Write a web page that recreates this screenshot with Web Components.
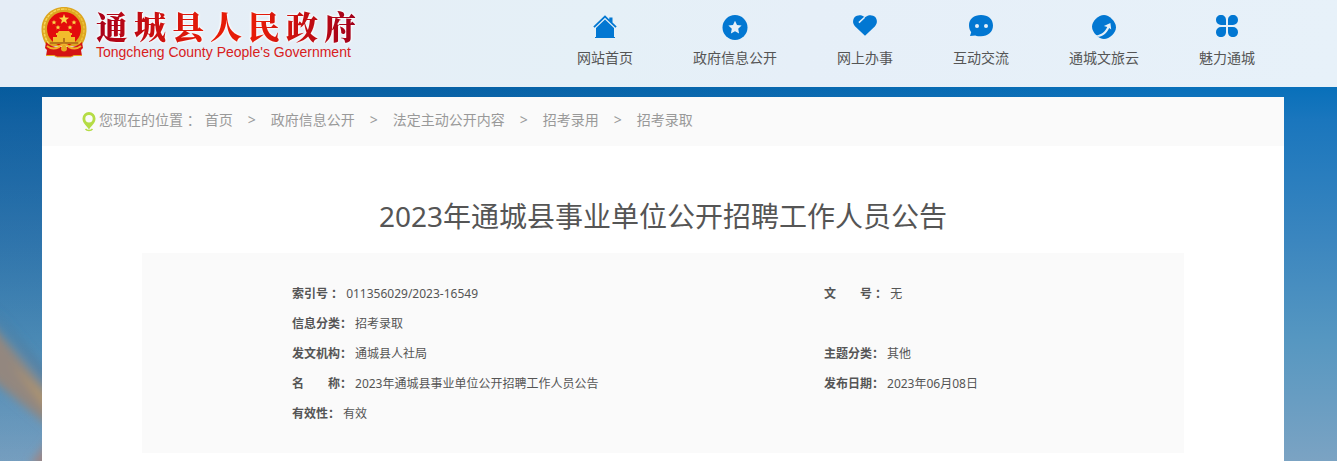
<!DOCTYPE html>
<html lang="zh-CN">
<head>
<meta charset="utf-8">
<title>2023年通城县事业单位公开招聘工作人员公告</title>
<style>
  body {
    margin: 0;
    font-family: "Noto Sans", "Noto Sans CJK SC", sans-serif;
    font-size: 14px;
    color: #555;
  }
</style>
</head>
<body>
<page-shell>
  <site-header slot="header">
    <site-logo slot="logo" sub="Tongcheng County People's Government">通城县人民政府</site-logo>
    <nav-item icon="home">网站首页</nav-item>
    <nav-item icon="star">政府信息公开</nav-item>
    <nav-item icon="heart">网上办事</nav-item>
    <nav-item icon="chat">互动交流</nav-item>
    <nav-item icon="travel">通城文旅云</nav-item>
    <nav-item icon="clover">魅力通城</nav-item>
  </site-header>
  <bread-crumb label="您现在的位置 ："></bread-crumb>
  <article-head>
    <span slot="title">2023年通城县事业单位公开招聘工作人员公告</span>
    <info-panel></info-panel>
  </article-head>
</page-shell>

<script>
const icons = {
  home: '<path d="M1.3 12.6 13 1.2l4.300 4.200V3.400h3.200v5.200l4.200 4-1.300 1.200L13 3.800 2.600 13.800z"/><path d="M13 5.600 22 14v9h1v1H3v-1h1v-9z"/>',
  star: '<circle cx="13" cy="13.500" r="12.500"/><path fill="#e6f0f8" d="m13 6.800 2 4.200 4.600.6-3.400 3.200.9 4.700-4.100-2.300-4.100 2.300.9-4.700-3.400-3.200 4.600-.6z"/>',
  heart: '<path d="M13 21.700 3.200 12.500C.4 9.700.5 5.700 2.800 3.100 5.200.7 9.500.3 13 3.300c3.500-3 7.800-2.600 10.200-.2 2.300 2.600 2.400 6.600-.4 9.400z"/><path d="M12.700 3.200 6.900 8.600" fill="none" stroke="#e6f0f8" stroke-width="1.500"/>',
  chat: '<path d="M13 1C6 1 1 5 1 11.300c0 3 .9 5.200 2.200 7L2 22l5.300-.6C9 22.200 11 22.300 13 22.300c7 0 12-4.300 12-10.800C25 5 20 1 13 1z"/><circle cx="9" cy="12" r="2" fill="#e6f0f8"/><circle cx="18" cy="12" r="2" fill="#e6f0f8"/>',
  travel: '<path d="M13 1C18 1 25 7.500 25 13.300S18.500 25 13 25C8 25 1 18.500 1 12.700 1 7 7.500 1 13 1z"/><path d="M4 21.300c6 .3 10.500-4 12.200-8.300l-3.300-1 6.500-3 .8 6.500-2-1.500C15.500 19.500 11.500 22.800 6.500 22.800z" fill="#e6f0f8"/>',
  clover: '<path d="M12 11H7A5 5 0 0 1 2 6C2 3 4 1 7 1s5 2 5 5zM14 11h5a5 5 0 0 0 5-5C24 3 22 1 19 1s-5 2-5 5zM12 13H7A5 5 0 0 0 2 18C2 21 4 23 7 23s5-2 5-5zM14 13h5a5 5 0 0 1 5 5c0 3-2 5-5 5s-5-2-5-5z"/>'
};

const caminho = ['首页', '政府信息公开', '法定主动公开内容', '招考录用', '招考录取'];

const dados = [
  ['索引号 ：', '011356029/2023-16549'],
  ['文　　号 ：', '无'],
  ['信息分类：', '招考录取'],
  null,
  ['发文机构：', '通城县人社局'],
  ['主题分类：', '其他'],
  ['名　　称：', '2023年通城县事业单位公开招聘工作人员公告'],
  ['发布日期：', '2023年06月08日'],
  ['有效性：', '有效']
];

// sky background, header on top, white sheet below
class PageShell extends HTMLElement {
  constructor() {
    super();
    this.attachShadow({ mode: 'open' }).innerHTML = `
      <style>
        :host {
          display: flex;
          flex-direction: column;
          min-height: 100vh;
          position: relative;
          background:
            radial-gradient(1200px 520px at 0 0, rgba(0, 50, 100, .4), rgba(0, 50, 100, 0)),
            linear-gradient(#0870ba 87px, #1a76bd 120px, #3b86bf 240px, #5697c1 340px, #7ba3c3 461px);
        }
        .beam { position: absolute; left: 0; top: 300px; }
        main {
          position: relative;
          flex: 1;
          margin: 10px 53px 0 42px;
          background: #fff;
        }
      </style>
      <svg class="beam" width="60" height="161" aria-hidden="true">
        <defs><filter id="soft" x="-50%" y="-50%" width="200%" height="200%"><feGaussianBlur stdDeviation="5"/></filter></defs>
        <g filter="url(#soft)">
          <path d="M-20 10 60 105 60 135 -20 70z" fill="#93877f"/>
          <path d="M10 62 60 110 60 125z" fill="#b89a68"/>
          <path d="M-10 5 60 90 60 100z" fill="#56748f"/>
          <path d="M30 165 60 125 60 175z" fill="#9c8584"/>
        </g>
      </svg>
      <slot name="header"></slot>
      <main><slot></slot></main>
    `;
  }
}
customElements.define('page-shell', PageShell);

class SiteHeader extends HTMLElement {
  constructor() {
    super();
    this.attachShadow({ mode: 'open' }).innerHTML = `
      <style>
        :host { display: block; background: linear-gradient(100deg, #e5edf6, #e5f0f7 45%, #e6eff8 60%, #e7f1f9); }
        header {
          display: flex;
          justify-content: space-between;
          align-items: flex-start;
          height: 87px;
          padding: 0 82px 0 40px;
          box-sizing: border-box;
        }
        nav { display: flex; gap: 60px; padding-top: 14px; }
      </style>
      <header>
        <slot name="logo"></slot>
        <nav><slot></slot></nav>
      </header>
    `;
  }
}
customElements.define('site-header', SiteHeader);

class SiteLogo extends HTMLElement {
  constructor() {
    super();
    this.attachShadow({ mode: 'open' }).innerHTML = `
      <style>
        :host { display: block; padding-top: 6px; }
        a { display: flex; gap: 8px; color: #d8201c; text-decoration: none; }
        .nome {
          display: block;
          width: 260px;
          font-family: "Noto Serif CJK SC", "Noto Sans CJK SC", serif;
          font-size: 32px;
          line-height: 38px;
          font-weight: 900;
          text-align: justify;
          text-align-last: justify;
          color: transparent;
          background: linear-gradient(90deg, #a8001a, #e61c08 42%, #e61c08 62%, #a0001c);
          -webkit-background-clip: text;
          background-clip: text;
          filter: drop-shadow(0 0 1px #fff) drop-shadow(0 0 1px #fff);
        }
        .sub { display: block; font: 14px/16px "Liberation Sans", Arial, sans-serif; white-space: nowrap; }
      </style>
      <a href="#">
        <svg width="48" height="52" viewBox="0 0 48 52" aria-hidden="true">
          <path d="M24 1C11 1 1.500 11 1.500 23c0 8 3 14 6 17h33c3-3 6-9 6-17C46.500 11 37 1 24 1z" fill="#dda620"/>
          <path d="M24 3C12.500 3 4 12 4 23c0 6 2 11 5 15" fill="none" stroke="#f6d75a" stroke-width="1.500" stroke-dasharray="3 1"/>
          <path d="M24 3c11.500 0 20 9 20 20 0 6-2 11-5 15" fill="none" stroke="#f0c23c" stroke-width="1.500" stroke-dasharray="3 1"/>
          <circle cx="24" cy="23" r="17" fill="#e30c0c"/>
          <path d="m24 8 1.300 3.600 3.800.1-3 2.300 1 3.700-3.100-2.100-3.100 2.100 1-3.700-3-2.300 3.800-.1z" fill="#fbd64a"/>
          <path id="s" d="m14 14 .7 1.600 1.800.1-1.400 1.100.5 1.700-1.600-1-1.600 1 .5-1.700-1.400-1.100 1.800-.1z" fill="#fbd64a"/>
          <use href="#s" x="4" y="5"/><use href="#s" x="16" y="5"/><use href="#s" x="20"/>
          <path d="M19 25h10l1.500 2H32v2H16v-2h1.500zM17 29h14v2H17zM13 31h22v5H13z" fill="#f2bb2c"/>
          <path d="M10 36h28v2H10zM23 32h2v4h-2z" fill="#b8761a"/>
          <path d="M6 36c4 4 8 5 12 5h12c4 0 8-1 12-5l1 6-2 2 1 6-7-1-4 2H17l-4-2-7 1 1-6-2-2z" fill="#d41414"/>
          <path d="M7 40c5 4 10 2 12 1 1-3 9-3 10 0 2 1 7 3 12-1" fill="none" stroke="#efb52c" stroke-width="2"/>
          <circle cx="24" cy="42.500" r="3" fill="#e8a923"/>
          <path d="M6 49.500h8l3 1.500h14l3-1.500h8" fill="none" stroke="#e8a923" stroke-width="1"/>
        </svg>
        <span>
          <span class="nome"><slot></slot></span>
          <span class="sub">${this.getAttribute('sub')}</span>
        </span>
      </a>
    `;
  }
}
customElements.define('site-logo', SiteLogo);

class NavItem extends HTMLElement {
  constructor() {
    super();
    this.attachShadow({ mode: 'open' }).innerHTML = `
      <style>
        :host { display: block; }
        a {
          display: flex;
          flex-direction: column;
          align-items: center;
          gap: 8px;
          line-height: 20px;
          color: #555;
          text-decoration: none;
          white-space: nowrap;
        }
        svg { fill: #0277d2; }
      </style>
      <a href="#">
        <svg width="26" height="26" viewBox="0 0 26 26" aria-hidden="true">${icons[this.getAttribute('icon')]}</svg>
        <slot></slot>
      </a>
    `;
  }
}
customElements.define('nav-item', NavItem);

class BreadCrumb extends HTMLElement {
  constructor() {
    super();
    this.attachShadow({ mode: 'open' }).innerHTML = `
      <style>
        :host { display: block; background: #fafafa; color: #999; }
        nav {
          display: flex;
          align-items: center;
          height: 49px;
          padding: 0 40px 3px;
          box-sizing: border-box;
          line-height: 20px;
          white-space: nowrap;
        }
        svg { margin: 3px 3px 0 0; }
        .label { margin-right: 4px; }
        a { color: #999; text-decoration: none; }
        i { font-style: normal; margin: 0 15px; }
      </style>
      <nav>
        <svg width="14" height="20" viewBox="0 0 14 20" fill="#b5dc45" aria-hidden="true">
          <path fill-rule="evenodd" d="M7 0a6.500 6.500 0 0 0-6.500 6.700C.5 11 4.500 13.500 7 17.500c2.500-4 6.500-6.500 6.500-10.800A6.500 6.500 0 0 0 7 0zm0 3a3.700 3.700 0 1 1 0 7.400A3.700 3.700 0 0 1 7 3z"/>
          <path d="M3.500 17c1.500 2 5.500 2 7 0" fill="none" stroke="#b5dc45" stroke-width="1.500"/>
        </svg>
        <span class="label">${this.getAttribute('label')}</span>
        ${caminho.map(c => `<a href="#">${c}</a>`).join('<i>&gt;</i>')}
      </nav>
    `;
  }
}
customElements.define('bread-crumb', BreadCrumb);

class ArticleHead extends HTMLElement {
  constructor() {
    super();
    this.attachShadow({ mode: 'open' }).innerHTML = `
      <style>
        :host { display: block; padding: 50px 100px 8px; }
        h1 { margin: 0 0 17px; font-size: 28px; line-height: 40px; font-weight: 400; text-align: center; }
      </style>
      <h1><slot name="title"></slot></h1>
      <slot></slot>
    `;
  }
}
customElements.define('article-head', ArticleHead);

class InfoPanel extends HTMLElement {
  constructor() {
    super();
    this.attachShadow({ mode: 'open' }).innerHTML = `
      <style>
        :host { display: block; background: #fafafa; padding: 26px 0 24px 150px; font-size: 12px; line-height: 30px; }
        dl { display: grid; grid-template-columns: minmax(0, 532px) 1fr; margin: 0; }
        div { display: flex; gap: 3px; }
        dt { font-weight: bold; }
        dd { margin: 0; }
      </style>
      <dl>
        ${dados.map(d => d ? `<div><dt>${d[0]}</dt><dd>${d[1]}</dd></div>` : '<div></div>').join('')}
      </dl>
    `;
  }
}
customElements.define('info-panel', InfoPanel);
</script>
</body>
</html>
